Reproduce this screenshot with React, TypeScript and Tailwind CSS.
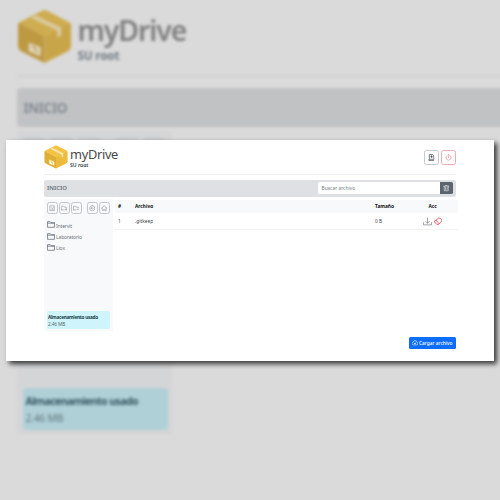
import React from "react";

function Box({ className }: { className: string }) {
  return (
    <svg viewBox="0 0 56 56" className={className}>
      <path d="M28 1 54 14 28 28 2 14Z" fill="#f2c344" />
      <path d="M2 14 28 28V55L4 43Q1 41 1 38V16Z" fill="#dfae35" />
      <path d="M54 14 28 28V55L52 43Q55 41 55 38V16Z" fill="#edbb3c" />
      <path d="M2 14 26 1.5Q28 .5 30 1.5L54 14 28 28Z" fill="#f2c344" />
      <path d="M14 9 19 6.500 45 19V27L41 29V22Z" fill="#fbe6ae" />
      <path d="m12 34 12 5v9l-12-5Z" fill="#fff4d6" />
      <path d="m15 38 3 1v3m2-1v3" stroke="#dfae35" strokeWidth="1.500" fill="none" />
    </svg>
  );
}

function Icon({ className, width = 1.3, children }: { className: string; width?: number; children: React.ReactNode }) {
  return (
    <svg viewBox="0 0 16 16" fill="none" stroke="currentColor" strokeWidth={width} strokeLinecap="round" strokeLinejoin="round" className={className}>
      {children}
    </svg>
  );
}

const folder = <path d="M1 13V3h5l1.500 2H14v8Zm0-7h13" />;

const tools = [
  <path key="a" d="M3 2h10v12H3Zm2 4 3 3 3-3M5 12h6" />,
  <path key="b" d="M1 12V3h4l2 2h6v3M1 12h7m3-1h4m-2-2v4" />,
  <path key="c" d="M1 12V3h4l2 2h6v3M1 12h7m3-1h4" />,
  <path key="d" d="M8 1.500a6.500 6.500 0 1 0 0 13 6.500 6.500 0 0 0 0-13ZM11 8H5m2.500-2.500L5 8l2.500 2.500" />,
  <path key="e" d="m1 8 7-6 7 6M3 7v7h10V7M6 11h4" />,
];

function Backdrop() {
  return (
    <div className="absolute inset-0 overflow-hidden bg-[#dadada]">
      <div className="flex w-[520px] flex-col pl-[16.500px] pt-[9px] blur-[1.4px]">
        <div className="flex h-[68px] border-b-2 border-[#cfcfcf]">
          <Box className="size-[55px] brightness-[.88] saturate-[.82]" />
          <div className="ml-[6px]">
            <div className="h-[38px] text-[28.5px] font-semibold leading-[42px] tracking-[-1.1px] text-[#808080]">myDrive</div>
            <div className="text-[11.6px] font-bold leading-[17px] tracking-[-0.1px] text-[#707982]">SU root</div>
          </div>
        </div>
        <div className="mt-[11px] flex h-[39px] items-center rounded bg-[#c1c2c4] pl-[7px] pt-px text-[13.5px] font-semibold tracking-[-0.2px] text-[#7d858d]">INICIO</div>
        <div className="mt-[4px] flex h-[303px] w-[155px] flex-col bg-[#d4d5d7] px-[6px] pb-[4px] pt-[7px]">
          <div className="flex gap-[5px]">
            {tools.map((_, i) => (
              <div key={i} className={"h-[24px] w-[23px] rounded border-2 border-[#c4c6c8] " + (i === 3 ? "ml-[9px]" : "")} />
            ))}
          </div>
          <div className="mt-auto h-[42px] w-[145px] rounded-sm bg-[#b0d0d7] pl-[3px] pt-[5px] text-[10.5px] leading-[17px] tracking-[-0.3px] text-[#61777d]">
            <div className="whitespace-nowrap font-bold tracking-[-0.550px] text-[#34565f]">Almacenamiento usado</div>
            <div>2.46 MB</div>
          </div>
        </div>
      </div>
    </div>
  );
}

function Sidebar() {
  return (
    <div className="flex h-[132px] w-[69px] flex-col bg-[#f8f9fb] pl-[2.5px] pr-[3px] pb-[2px] pt-[3px]">
      <div className="flex gap-[1px]">
        {tools.map((tool, i) => (
          <div key={i} className={"flex h-[12px] w-[11px] items-center justify-center rounded-[2.5px] border border-[#c1c4c8] text-[#858b91] " + (i === 3 ? "ml-[4px]" : "")}>
            <Icon className="size-[6.5px]">{tool}</Icon>
          </div>
        ))}
      </div>
      <div className="mt-[6px] flex flex-col text-[5px] tracking-[-0.150px] text-[#6c757d]">
        {["Intervit", "Laboratorio", "Liox"].map((name) => (
          <div key={name} className="flex h-[11.4px] items-center gap-[1px]">
            <Icon className="mb-[2px] size-[8.5px]" width={1.5}>{folder}</Icon>
            <span className="pt-px leading-[11px]">{name}</span>
          </div>
        ))}
      </div>
      <div className="mt-auto h-[18.500px] rounded-[1.5px] bg-[#cff4fc] pl-[1.5px] pt-[3px] text-[4.7px] leading-[7.5px] tracking-[-0.100px] text-[#506970]">
        <div className="whitespace-nowrap font-bold tracking-[-0.260px] text-[#17424c]">Almacenamiento usado</div>
        <div>2.46 MB</div>
      </div>
    </div>
  );
}

function FileTable() {
  return (
    <div className="ml-[2px] mt-px flex-1 text-[4.8px] text-[#41464b]">
      <div className="flex h-[13px] items-center bg-[#f8f9fb] pl-[3px] font-bold text-[#111]">
        <span className="w-[17px]">#</span>
        <span className="w-[240px]">Archivo</span>
        <span className="w-[53.500px]">Tamaño</span>
        <span>Acc</span>
      </div>
      <div className="flex h-[17px] items-center border-b border-[#f1f2f3] pl-[3px]">
        <span className="w-[17px] pt-[1.500px]">1</span>
        <span className="w-[240px] pt-[1.500px]">.gitkeep</span>
        <span className="w-[48px] pt-[1.500px]">0 B</span>
        <span className="flex items-center gap-[1.500px]">
          <Icon className="size-[9px] text-[#6c757d]" width={1.2}><path d="M1 10v4h14v-4M8 2v9M5 8l3 3 3-3" /></Icon>
          <Icon className="size-[8.500px] text-[#e94856]" width={1.6}><path d="M9.500 2h2L15 5.500v2L8.500 14h-3L1 9.500v-1ZM4.500 6.500l5 6" /></Icon>
        </span>
      </div>
    </div>
  );
}

export default function App() {
  return (
    <main className="relative h-[500px] w-[500px] overflow-hidden pl-[6px] pt-[140px] [font-family:'Noto_Sans','Open_Sans',sans-serif]">
      <Backdrop />
      <section className="relative h-[221px] w-[488px] bg-white pl-[38px] pr-[38px] pt-[5px] shadow-[3px_3px_5px_rgba(0,0,0,0.75)]">
        <header className="flex h-[29.500px] w-[412px] border-b border-[#eeeeee]">
          <Box className="size-[24px]" />
          <div className="ml-[2px]">
            <div className="h-[17px] text-[12.800px] leading-[18.500px] tracking-[-0.300px] text-[#484848]">myDrive</div>
            <div className="text-[5.100px] font-semibold leading-[6px] text-[#34404b]">SU root</div>
          </div>
          <div className="ml-auto mt-[4.500px] flex gap-[2px]">
            <div className="flex h-[15px] w-[15px] items-center justify-center rounded-[2.5px] border border-[#c6c9cc] text-[#343a40]">
              <Icon className="size-[7px]" width={1.5}><path d="M3 10V1h7l3 3v6M8 4v4M6 6h4M3 12h10v3H3Z" /></Icon>
            </div>
            <div className="flex h-[15px] w-[15px] items-center justify-center rounded-[2.5px] border border-[#f3a9b0] text-[#ed7983]">
              <Icon className="size-[7px]" width={1.4}><path d="M8 1v7M4.500 3a6 6 0 1 0 7 0" /></Icon>
            </div>
          </div>
        </header>
        <div className="mt-[5px] flex h-[17.500px] w-[412px] items-center rounded-[2px] bg-[#dee0e3] pl-[3px] pr-[3px]">
          <span className="text-[6px] font-semibold leading-[8px] text-[#68717a]">INICIO</span>
          <div className="ml-auto flex h-[12px] w-[135.500px] overflow-hidden rounded-[1.500px] bg-white">
            <span className="flex-1 pl-[4px] text-[4.900px] leading-[12.500px] text-[#747b82]">Buscar archivo</span>
            <div className="flex w-[13px] items-center justify-center bg-[#5c656e] text-white">
              <Icon className="size-[6.500px]"><path d="M2 3h12M6 1h4M3 3v11h10V3M6 6v5m4-5v5" /></Icon>
            </div>
          </div>
        </div>
        <div className="mt-[2px] flex w-[414px]">
          <Sidebar />
          <FileTable />
        </div>
        <div className="mt-[6px] flex w-[412px] justify-end">
          <div className="flex h-[12px] w-[47.500px] items-center justify-center gap-[1px] rounded-[1.500px] bg-[#0d6efd] text-[4.800px] font-medium text-white">
            <Icon className="size-[6px]" width={1.500}><path d="M5 13H4a3.500 3.500 0 0 1-.5-7 4.500 4.500 0 0 1 9 0 3.500 3.500 0 0 1-.5 7h-1M8 14V8M6 10l2-2 2 2" /></Icon>
            <span className="whitespace-nowrap pt-px">Cargar archivo</span>
          </div>
        </div>
      </section>
    </main>
  );
}
